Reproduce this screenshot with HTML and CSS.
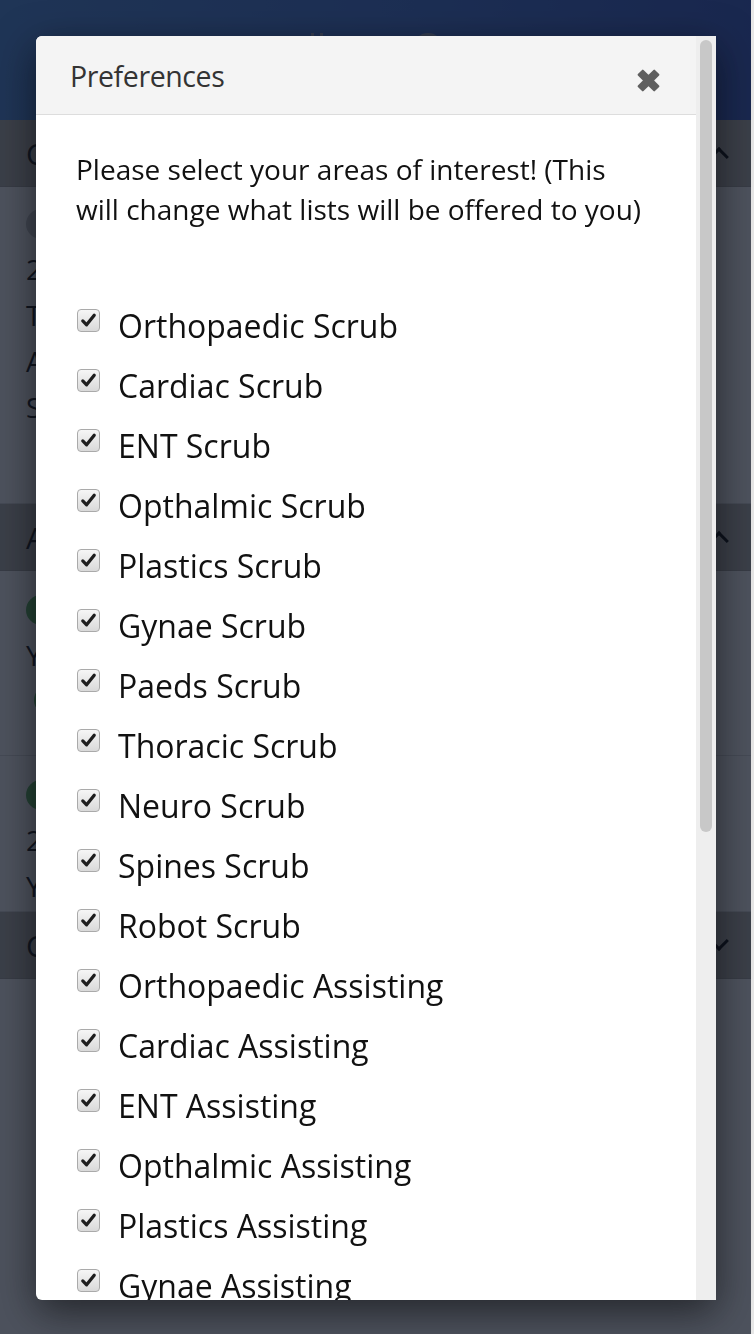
FILE: index.html
```html
<!DOCTYPE html>
<html lang="en">
<head>
<meta charset="utf-8">
<title>Preferences</title>
<link rel="stylesheet" href="styles.css">
</head>
<body>
<div class="app" aria-hidden="true">
  <header class="topbar">
    <span class="logo-bars"></span>
    <span class="search-ring"></span>
  </header>
  <section class="group-head"><span>C</span><span class="chev up"></span></section>
  <div class="card">
    <span class="avatar grey"></span>
    <p class="line">2</p>
    <p class="line">T</p>
    <p class="line">A</p>
    <p class="line">S</p>
    <span class="avatar grey small"></span>
  </div>
  <section class="group-head"><span>A</span><span class="chev up"></span></section>
  <div class="card short">
    <span class="avatar green"></span>
    <p class="line">Y</p>
    <span class="avatar green indent"></span>
  </div>
  <div class="card short2">
    <span class="avatar green"></span>
    <p class="line">2</p>
    <p class="line">Y</p>
  </div>
  <section class="group-head"><span>C</span><span class="chev down"></span></section>
</div>

<div class="overlay"></div>

<div class="modal">
  <div class="modal-scroll">
    <div class="modal-header">
      <h4 class="modal-title">Preferences</h4>
      <button class="close" type="button" aria-label="Close">
        <svg width="27" height="27" viewBox="0 0 26 26"><path d="M3.5 7.5 7.5 3.5 13 9 18.5 3.5 22.5 7.5 17 13 22.5 18.5 18.5 22.5 13 17 7.5 22.5 3.5 18.5 9 13Z" fill="#5f5f5f" stroke="#5f5f5f" stroke-width="2" stroke-linejoin="round"/></svg>
      </button>
    </div>
    <div class="modal-body">
      <p class="intro">Please select your areas of interest! (This will change what lists will be offered to you)</p>
      <ul class="prefs">
        <li><label><span class="cb"><svg viewBox="0 0 22 22"><path d="M5 11.5 9 15.5 17 5.5" fill="none" stroke="#1e1e1e" stroke-width="3.4" stroke-linecap="round" stroke-linejoin="round"/></svg></span>Orthopaedic Scrub</label></li>
        <li><label><span class="cb"><svg viewBox="0 0 22 22"><path d="M5 11.5 9 15.5 17 5.5" fill="none" stroke="#1e1e1e" stroke-width="3.4" stroke-linecap="round" stroke-linejoin="round"/></svg></span>Cardiac Scrub</label></li>
        <li><label><span class="cb"><svg viewBox="0 0 22 22"><path d="M5 11.5 9 15.5 17 5.5" fill="none" stroke="#1e1e1e" stroke-width="3.4" stroke-linecap="round" stroke-linejoin="round"/></svg></span>ENT Scrub</label></li>
        <li><label><span class="cb"><svg viewBox="0 0 22 22"><path d="M5 11.5 9 15.5 17 5.5" fill="none" stroke="#1e1e1e" stroke-width="3.4" stroke-linecap="round" stroke-linejoin="round"/></svg></span>Opthalmic Scrub</label></li>
        <li><label><span class="cb"><svg viewBox="0 0 22 22"><path d="M5 11.5 9 15.5 17 5.5" fill="none" stroke="#1e1e1e" stroke-width="3.4" stroke-linecap="round" stroke-linejoin="round"/></svg></span>Plastics Scrub</label></li>
        <li><label><span class="cb"><svg viewBox="0 0 22 22"><path d="M5 11.5 9 15.5 17 5.5" fill="none" stroke="#1e1e1e" stroke-width="3.4" stroke-linecap="round" stroke-linejoin="round"/></svg></span>Gynae Scrub</label></li>
        <li><label><span class="cb"><svg viewBox="0 0 22 22"><path d="M5 11.5 9 15.5 17 5.5" fill="none" stroke="#1e1e1e" stroke-width="3.4" stroke-linecap="round" stroke-linejoin="round"/></svg></span>Paeds Scrub</label></li>
        <li><label><span class="cb"><svg viewBox="0 0 22 22"><path d="M5 11.5 9 15.5 17 5.5" fill="none" stroke="#1e1e1e" stroke-width="3.4" stroke-linecap="round" stroke-linejoin="round"/></svg></span>Thoracic Scrub</label></li>
        <li><label><span class="cb"><svg viewBox="0 0 22 22"><path d="M5 11.5 9 15.5 17 5.5" fill="none" stroke="#1e1e1e" stroke-width="3.4" stroke-linecap="round" stroke-linejoin="round"/></svg></span>Neuro Scrub</label></li>
        <li><label><span class="cb"><svg viewBox="0 0 22 22"><path d="M5 11.5 9 15.5 17 5.5" fill="none" stroke="#1e1e1e" stroke-width="3.4" stroke-linecap="round" stroke-linejoin="round"/></svg></span>Spines Scrub</label></li>
        <li><label><span class="cb"><svg viewBox="0 0 22 22"><path d="M5 11.5 9 15.5 17 5.5" fill="none" stroke="#1e1e1e" stroke-width="3.4" stroke-linecap="round" stroke-linejoin="round"/></svg></span>Robot Scrub</label></li>
        <li><label><span class="cb"><svg viewBox="0 0 22 22"><path d="M5 11.5 9 15.5 17 5.5" fill="none" stroke="#1e1e1e" stroke-width="3.4" stroke-linecap="round" stroke-linejoin="round"/></svg></span>Orthopaedic Assisting</label></li>
        <li><label><span class="cb"><svg viewBox="0 0 22 22"><path d="M5 11.5 9 15.5 17 5.5" fill="none" stroke="#1e1e1e" stroke-width="3.4" stroke-linecap="round" stroke-linejoin="round"/></svg></span>Cardiac Assisting</label></li>
        <li><label><span class="cb"><svg viewBox="0 0 22 22"><path d="M5 11.5 9 15.5 17 5.5" fill="none" stroke="#1e1e1e" stroke-width="3.4" stroke-linecap="round" stroke-linejoin="round"/></svg></span>ENT Assisting</label></li>
        <li><label><span class="cb"><svg viewBox="0 0 22 22"><path d="M5 11.5 9 15.5 17 5.5" fill="none" stroke="#1e1e1e" stroke-width="3.4" stroke-linecap="round" stroke-linejoin="round"/></svg></span>Opthalmic Assisting</label></li>
        <li><label><span class="cb"><svg viewBox="0 0 22 22"><path d="M5 11.5 9 15.5 17 5.5" fill="none" stroke="#1e1e1e" stroke-width="3.4" stroke-linecap="round" stroke-linejoin="round"/></svg></span>Plastics Assisting</label></li>
        <li><label><span class="cb"><svg viewBox="0 0 22 22"><path d="M5 11.5 9 15.5 17 5.5" fill="none" stroke="#1e1e1e" stroke-width="3.4" stroke-linecap="round" stroke-linejoin="round"/></svg></span>Gynae Assisting</label></li>
      </ul>
    </div>
  </div>
  <div class="scrollbar"><span class="thumb"></span></div>
</div>
</body>
</html>
```

FILE: styles.css
```css
* { box-sizing: border-box; }

html, body {
  margin: 0;
  padding: 0;
  height: 1334px;
  overflow: hidden;
}

body {
  font-family: "Open Sans", "Liberation Sans", sans-serif;
  background: #ffffff;
  color: #111;
}

/* ---------- underlying app ---------- */
.app {
  display: flex;
  flex-direction: column;
}

.topbar {
  height: 120px;
  background: linear-gradient(90deg, #4a8be2 0%, #3f72d8 55%, #3256c6 100%);
  display: flex;
  justify-content: center;
  gap: 90px;
  padding-top: 33px;
}

.logo-bars {
  width: 12px;
  height: 14px;
  border-left: 3px solid #9aa9c8;
  border-right: 3px solid #9aa9c8;
}

.search-ring {
  width: 30px;
  height: 30px;
  border: 4px solid #9aa9c8;
  border-radius: 50%;
}

.group-head {
  height: 67px;
  background: #b7b4ad;
  display: flex;
  align-items: center;
  justify-content: space-between;
  padding: 0 28px 0 26px;
  font-size: 30px;
  border-bottom: 1px solid #a9a6a0;
}

.chev {
  width: 14px;
  height: 14px;
  border-left: 3px solid #000;
  border-top: 3px solid #000;
}
.chev.up { transform: rotate(45deg); margin-top: 8px; }
.chev.down { transform: rotate(225deg); margin-top: -8px; }

.card {
  background: #fff;
  height: 317px;
  padding: 22px 0 0 26px;
  display: flex;
  flex-direction: column;
  gap: 14px;
  font-size: 28px;
  border-bottom: 1px solid #ddd;
}
.card.short { height: 185px; padding-top: 24px; }
.card.short2 { height: 156px; padding-top: 24px; }

.line { margin: 0; line-height: 32px; }

.avatar {
  width: 30px;
  height: 30px;
  border-radius: 50%;
}
.avatar.grey { background: #c8c8c8; }
.avatar.small { margin-left: 10px; }
.avatar.green { background: #5cb85c; }
.avatar.indent { margin-left: 8px; }

/* ---------- overlay ---------- */
.overlay {
  position: fixed;
  inset: 0;
  background: rgba(17, 24, 39, 0.75);
}

.overlay::after {
  content: "";
  position: absolute;
  top: 0;
  right: 0;
  width: 3px;
  height: 100%;
  background: #e8e8e8;
}

/* ---------- modal ---------- */
.modal {
  position: fixed;
  left: 36px;
  top: 36px;
  width: 680px;
  height: 1264px;
  background: #fff;
  border-radius: 6px 0 0 6px;
  box-shadow: 0 12px 40px rgba(0, 0, 0, 0.55);
  display: flex;
  overflow: hidden;
}

.modal-scroll {
  flex: 1;
  min-width: 0;
  overflow: hidden;
}

.scrollbar {
  width: 20px;
  background: #eeeeee;
  padding: 4px;
  display: flex;
  flex-direction: column;
}

.thumb {
  height: 792px;
  background: #c8c8c8;
  border-radius: 6px;
}

.modal-header {
  height: 79px;
  background: #f4f4f4;
  border-bottom: 1px solid #dddddd;
  display: flex;
  align-items: center;
  justify-content: space-between;
  padding: 3px 34px 0 34px;
}

.modal-title {
  margin: 0;
  font-size: 28.5px;
  font-weight: 400;
  color: #333;
  letter-spacing: -0.4px;
  padding-bottom: 2px;
}

.close {
  border: 0;
  background: transparent;
  padding: 0;
  width: 27px;
  height: 27px;
  margin-top: 8px;
  display: flex;
}

.modal-body {
  padding: 34px 40px 62px 40px;
}

.intro {
  margin: 0 0 66px;
  padding-right: 8px;
  font-size: 28px;
  line-height: 40px;
  color: #111;
}

.prefs {
  list-style: none;
  margin: 0;
  padding: 0;
}

.prefs li {
  height: 60px;
  display: flex;
  align-items: center;
}

.prefs label {
  display: flex;
  align-items: center;
  font-size: 32px;
  color: #111;
}

.cb {
  width: 23px;
  height: 23px;
  margin: -10px 18px 0 1px;
  border: 1px solid #aaaaaa;
  border-radius: 4px;
  background: linear-gradient(#f6f6f6, #d9d9d9);
  display: flex;
}

.cb svg {
  width: 21px;
  height: 21px;
}
```
